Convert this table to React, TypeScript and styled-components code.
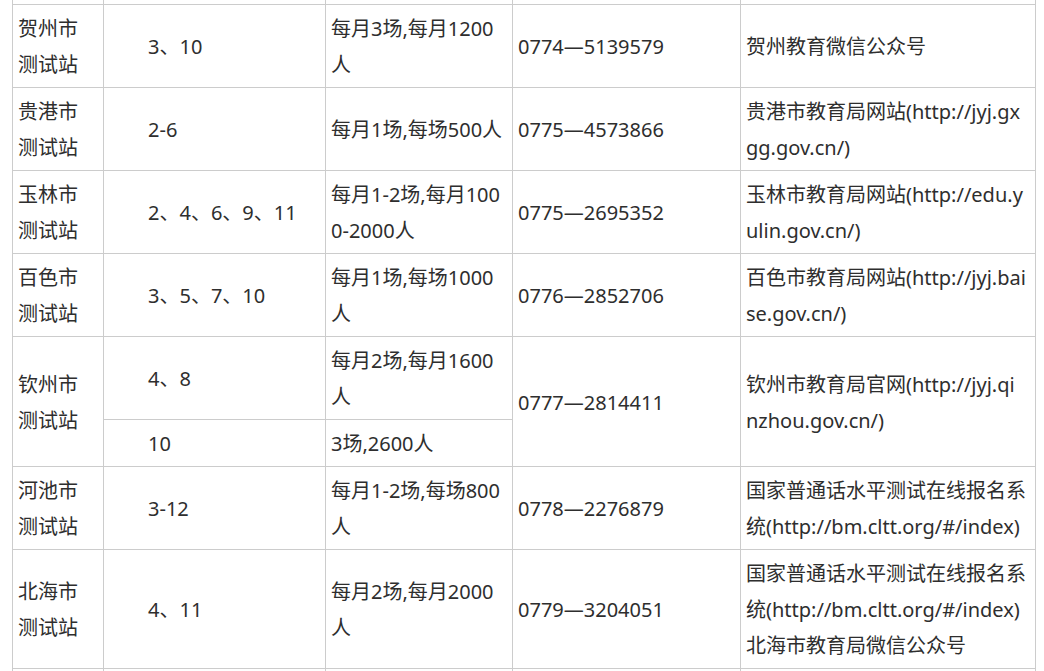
import React from "react";
import styled, { createGlobalStyle } from "styled-components";

const GlobalStyle = createGlobalStyle`
  html, body {
    margin: 0;
    padding: 0;
    overflow: hidden;
    background: #fff;
  }
`;

const Page = styled.div`
  padding-left: 12px;
`;

const Table = styled.table`
  border-collapse: collapse;
  table-layout: fixed;
  width: 1023px;
  margin-top: -79px;
  font-family: "Noto Sans", "Noto Sans CJK SC", sans-serif;
  font-size: 20px;
  line-height: 36px;
  color: #2e2e2e;
`;

const Col = styled.col<{ $w: number }>`
  width: ${(p) => p.$w}px;
`;

const Cell = styled.td<{ $indent?: boolean }>`
  border: 1px solid #ccc;
  padding: 6px 5px 4px ${(p) => (p.$indent ? "44px" : "5px")};
  vertical-align: middle;
  white-space: nowrap;
  overflow: visible;
`;

type Range = { months: string; sessions: string[] };
type Station = { city: string; ranges: Range[]; phone: string; site: string[] };

const stations: Station[] = [
  {
    city: "贺州市",
    ranges: [{ months: "3、10", sessions: ["每月3场,每月1200", "人"] }],
    phone: "0774—5139579",
    site: ["贺州教育微信公众号"],
  },
  {
    city: "贵港市",
    ranges: [{ months: "2-6", sessions: ["每月1场,每场500人"] }],
    phone: "0775—4573866",
    site: ["贵港市教育局网站(http://jyj.gx", "gg.gov.cn/)"],
  },
  {
    city: "玉林市",
    ranges: [{ months: "2、4、6、9、11", sessions: ["每月1-2场,每月100", "0-2000人"] }],
    phone: "0775—2695352",
    site: ["玉林市教育局网站(http://edu.y", "ulin.gov.cn/)"],
  },
  {
    city: "百色市",
    ranges: [{ months: "3、5、7、10", sessions: ["每月1场,每场1000", "人"] }],
    phone: "0776—2852706",
    site: ["百色市教育局网站(http://jyj.bai", "se.gov.cn/)"],
  },
  {
    city: "钦州市",
    ranges: [
      { months: "4、8", sessions: ["每月2场,每月1600", "人"] },
      { months: "10", sessions: ["3场,2600人"] },
    ],
    phone: "0777—2814411",
    site: ["钦州市教育局官网(http://jyj.qi", "nzhou.gov.cn/)"],
  },
  {
    city: "河池市",
    ranges: [{ months: "3-12", sessions: ["每月1-2场,每场800", "人"] }],
    phone: "0778—2276879",
    site: ["国家普通话水平测试在线报名系", "统(http://bm.cltt.org/#/index)"],
  },
  {
    city: "北海市",
    ranges: [{ months: "4、11", sessions: ["每月2场,每月2000", "人"] }],
    phone: "0779—3204051",
    site: [
      "国家普通话水平测试在线报名系",
      "统(http://bm.cltt.org/#/index)",
      "北海市教育局微信公众号",
    ],
  },
];

const colWidths = [91, 222, 187, 228, 295];

const Lines = ({ lines }: { lines: string[] }) => (
  <>
    {lines.map((l, i) => (
      <React.Fragment key={i}>
        {i > 0 && <br />}
        {l}
      </React.Fragment>
    ))}
  </>
);

// rows cut off by the top and bottom edges of the view
const FillerRow = () => (
  <tr>
    {colWidths.map((_, i) => (
      <Cell key={i}>
        <Lines lines={["\u00a0", "\u00a0"]} />
      </Cell>
    ))}
  </tr>
);

const StationRows = ({ s }: { s: Station }) => {
  const span = s.ranges.length;
  return (
    <>
      {s.ranges.map((r, i) => (
        <tr key={i}>
          {i === 0 && (
            <Cell rowSpan={span}>
              <Lines lines={[s.city, "测试站"]} />
            </Cell>
          )}
          <Cell $indent>{r.months}</Cell>
          <Cell>
            <Lines lines={r.sessions} />
          </Cell>
          {i === 0 && <Cell rowSpan={span}>{s.phone}</Cell>}
          {i === 0 && (
            <Cell rowSpan={span}>
              <Lines lines={s.site} />
            </Cell>
          )}
        </tr>
      ))}
    </>
  );
};

export default function App() {
  return (
    <Page>
      <GlobalStyle />
      <Table>
        <colgroup>
          {colWidths.map((w, i) => (
            <Col key={i} $w={w} />
          ))}
        </colgroup>
        <tbody>
          <FillerRow />
          {stations.map((s) => (
            <StationRows key={s.city} s={s} />
          ))}
          <FillerRow />
        </tbody>
      </Table>
    </Page>
  );
}
